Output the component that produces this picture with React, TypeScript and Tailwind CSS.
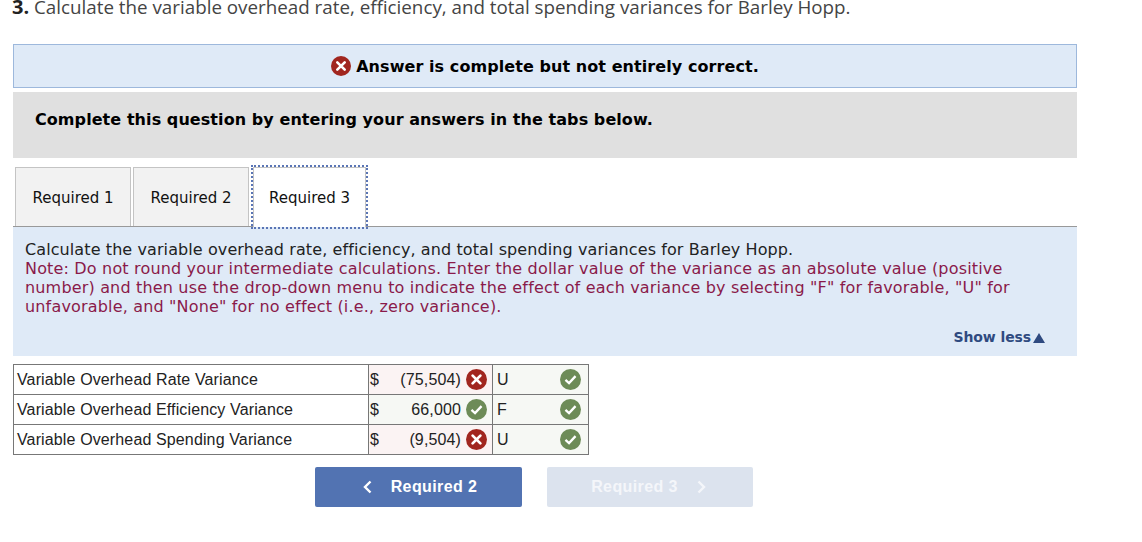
import React from 'react';

const verdana = "font-['DejaVu_Sans',sans-serif]";
const arial = "font-['Liberation_Sans',Arial,sans-serif]";

const StatusIcon = ({ ok, size = 21 }: { ok: boolean; size?: number }) => (
  <svg width={size} height={size} viewBox="0 0 20 20" className="shrink-0">
    <circle cx="10" cy="10" r="10" fill={ok ? '#6d8b57' : '#a1261f'} />
    {ok ? (
      <path d="M5.2 10.4 8.6 13.4 14.8 6.8" fill="none" stroke="#fff" strokeWidth="2.2" />
    ) : (
      <path d="M6.3 6.3 13.7 13.7M13.7 6.3 6.3 13.7" fill="none" stroke="#fff" strokeWidth="2.6" strokeLinecap="round" />
    )}
  </svg>
);

type Row = { label: string; value: string; ok: boolean; effect: string };

const rows: Row[] = [
  { label: 'Variable Overhead Rate Variance', value: '(75,504)', ok: false, effect: 'U' },
  { label: 'Variable Overhead Efficiency Variance', value: '66,000', ok: true, effect: 'F' },
  { label: 'Variable Overhead Spending Variance', value: '(9,504)', ok: false, effect: 'U' },
];

const Tab = ({ label, active }: { label: string; active?: boolean }) => (
  <div
    className={
      active
        ? 'relative -mb-px ml-[2px] flex h-[60px] w-[113px] items-center justify-center border border-[#c4c4c4] border-b-0 bg-white pt-[1px] outline-dotted outline-2 outline-[#5a75b5]'
        : 'flex h-[59px] w-[116px] items-center justify-center border border-[#c4c4c4] border-b-0 bg-[#f2f2f2] pt-[2px]'
    }
  >
    <span className="text-[15px] text-[#111]">{label}</span>
  </div>
);

export default function App() {
  return (
    <div className="h-[542px] w-[1142px] overflow-hidden bg-white">
      <div className="flex h-[44px] items-start pl-[12px]">
        <p className="-mt-[6px] font-['Open_Sans',sans-serif] text-[18.8px] leading-[25px] text-[#444]">
          <b className="text-[20px] font-bold text-[#222]">3.</b> Calculate the variable overhead rate, efficiency, and total spending variances for Barley Hopp.
        </p>
      </div>

      <div className={`ml-[13px] w-[1064px] ${verdana}`}>
        <div className="flex h-[44px] items-center justify-center gap-[5px] border border-[#9db8dc] bg-[#dfeaf7]">
          <StatusIcon ok={false} size={20} />
          <span className="pt-[1px] text-[16px] font-bold tracking-[0.07px] text-black">Answer is complete but not entirely correct.</span>
        </div>

        <div className="mt-[4px] flex h-[66px] items-start bg-[#e0e0e0] pl-[22px] pt-[17px]">
          <span className="text-[16px] font-bold leading-[22px] tracking-[0.07px] text-black">Complete this question by entering your answers in the tabs below.</span>
        </div>

        <div className="mt-[9px] flex items-end gap-[2px] border-b border-[#999] pl-[2px]">
          <Tab label="Required 1" />
          <Tab label="Required 2" />
          <Tab label="Required 3" active />
        </div>

        <div className="flex h-[129px] flex-col bg-[#dfeaf7] pl-[12px] pr-[32px] pt-[13px]">
          <p className="text-[16px] leading-[19px] tracking-[0.095px] text-[#222]">Calculate the variable overhead rate, efficiency, and total spending variances for Barley Hopp.</p>
          <p className="text-[16px] leading-[19px] tracking-[0.17px] text-[#8a1a4a]">
            Note: Do not round your intermediate calculations. Enter the dollar value of the variance as an absolute value (positive number) and then use the drop-down menu to indicate the effect of each variance by selecting "F" for favorable, "U" for unfavorable, and "None" for no effect (i.e., zero variance).
          </p>
          <div className="mt-[11px] flex items-center justify-end gap-[2px]">
            <span className="text-[14px] font-bold tracking-[-0.1px] text-[#2f4a80]">Show less</span>
            <span className="h-0 w-0 border-x-[6px] border-b-[10px] border-x-transparent border-b-[#2f4a80]" />
          </div>
        </div>

        <div className={`mt-[8px] w-[576px] border border-[#777] ${arial} text-[16px] tracking-[0.13px] text-[#222]`}>
          {rows.map((row, i) => (
            <div key={row.label} className={i > 0 ? 'flex h-[30px] border-t border-[#777]' : 'flex h-[29px]'}>
              <div className="flex w-[355px] items-center border-r border-[#777] pl-[3px]">{row.label}</div>
              <div className={`flex w-[124px] items-center border-r border-[#777] pl-[1px] pr-[5px] ${row.ok ? 'bg-[#f6f8f4]' : 'bg-[#fbf3f3]'}`}>
                <span>$</span>
                <span className="ml-auto mr-[5px]">{row.value}</span>
                <StatusIcon ok={row.ok} />
              </div>
              <div className="flex flex-1 items-center bg-[#f6f8f4] pl-[4px] pr-[7px]">
                <span>{row.effect}</span>
                <span className="ml-auto"><StatusIcon ok /></span>
              </div>
            </div>
          ))}
        </div>

        <div className={`mt-[12px] flex gap-[25px] pl-[302px] ${arial}`}>
          <div className="flex h-[40px] w-[207px] items-center justify-center gap-[19px] rounded-[2px] bg-[#5273b2] pl-[2px] text-[16px] font-bold tracking-[0.4px] text-white">
            <svg width="10" height="14" viewBox="0 0 10 14"><path d="M8.5 1.5 3 7l5.5 5.5" fill="none" stroke="#fff" strokeWidth="2.4" /></svg>
            <span>Required 2</span>
          </div>
          <div className="flex h-[40px] w-[206px] items-center justify-center gap-[19px] rounded-[2px] bg-[#dce3ee] pr-[2px] text-[16px] font-bold tracking-[0.4px] text-[#f4f6fa]">
            <span>Required 3</span>
            <svg width="10" height="14" viewBox="0 0 10 14"><path d="M1.5 1.5 7 7l-5.5 5.5" fill="none" stroke="#f4f6fa" strokeWidth="2.4" /></svg>
          </div>
        </div>
      </div>
    </div>
  );
}
